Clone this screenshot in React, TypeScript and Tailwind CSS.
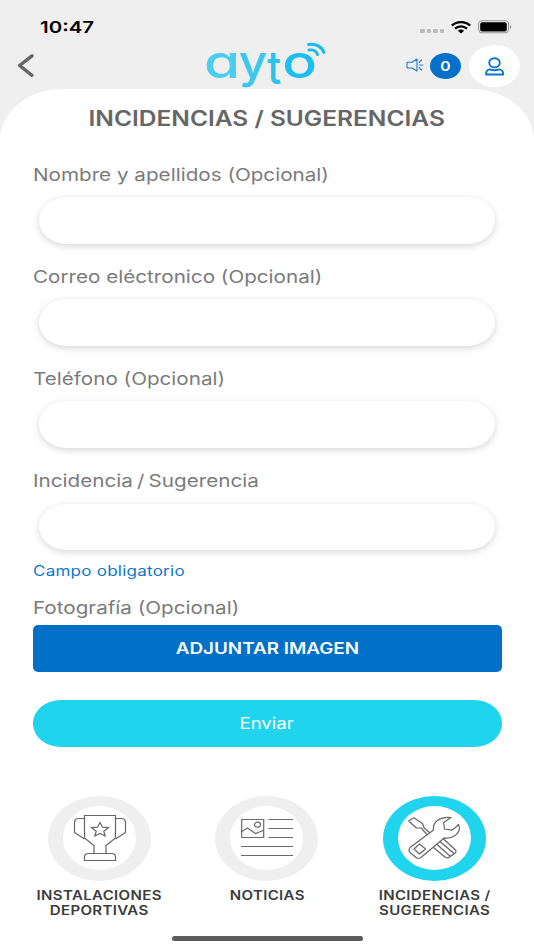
import type { ReactNode } from 'react'
import clsx from 'clsx'

interface TabProps {
  label: ReactNode
  active?: boolean
  children: ReactNode
}

const fields = [
  { label: 'Nombre y apellidos (Opcional)' },
  { label: 'Correo eléctronico (Opcional)' },
  { label: 'Teléfono (Opcional)' },
  { label: 'Incidencia / Sugerencia', tight: true },
]

function Label({ children, tight }: { children: ReactNode; tight?: boolean }) {
  return (
    <span
      className={clsx(
        'block w-fit origin-left scale-x-[1.18] whitespace-nowrap text-[17.5px] leading-6 text-[#7b7b7b]',
        tight && '[word-spacing:-1.4px]'
      )}
    >
      {children}
    </span>
  )
}

function StatusBar() {
  return (
    <div className="flex h-[42px] items-start justify-between pl-[40px] pr-[22px] pt-[15px]">
      <span className="origin-left scale-x-[1.24] text-[16.5px] font-semibold leading-6 text-black">10:47</span>
      <div className="flex items-center pt-[5px]">
        <div className="mr-[7px] mt-[8px] flex gap-[2px]">
          {[0, 1, 2, 3].map((dot) => (
            <span key={dot} className="h-[4px] w-[4.5px] rounded-[1px] bg-[#bdbdbd]" />
          ))}
        </div>
        <svg width="20" height="13" viewBox="0 0 20 13" className="mr-[7px]" fill="none" stroke="#000">
          <path d="M.8 4.6C6-.1 14-.1 19.2 4.6" strokeWidth="2.4" />
          <path d="M4 7.6c3.4-3 8.6-3 12 0" strokeWidth="2.2" />
          <path d="M6.9 9.7c1.8-1.5 4.4-1.5 6.2 0L10 12.6z" fill="#000" stroke="none" />
        </svg>
        <svg width="34" height="14" viewBox="0 0 34 14">
          <rect x=".6" y=".8" width="30" height="12" rx="3.6" fill="none" stroke="#999" strokeWidth="1.1" />
          <rect x="2.2" y="2.2" width="26.6" height="9.2" rx="2" fill="#000" />
          <path d="M32 4.9c1.6.6 1.6 3.5 0 4.1z" fill="#888" />
        </svg>
      </div>
    </div>
  )
}

function Logo() {
  return (
    <svg width="122" height="52" viewBox="205 40 122 52" className="overflow-visible" aria-label="ayto">
      <defs>
        <linearGradient id="ayto" x1="206" x2="325" y1="0" y2="0" gradientUnits="userSpaceOnUse">
          <stop offset="0" stopColor="#4fcdf0" />
          <stop offset="1" stopColor="#0cb9f0" />
        </linearGradient>
      </defs>
      <g className="font-[Inter] text-[45px] font-medium [font-feature-settings:'cv11']">
        <text transform="translate(204 77.7) scale(1.3 1.02)" fill="#4bcdf0">a</text>
        <text transform="translate(238.5 77.7) scale(1.11 1.02)" fill="#3bc8ef">y</text>
        <text transform="translate(267.200 84) scale(.9 1.02)" fill="#29c3f0">t</text>
        <text transform="translate(282.2 77.7) scale(1.28 1.02)" fill="#1bbff0">o</text>
      </g>
      <g fill="none" stroke="url(#ayto)" strokeWidth="3" strokeLinecap="round">
        <path d="M308.5 44.4c7-1 13.5 2.2 15.3 8" />
        <path d="M309 50c4-.6 7.7 1.2 8.5 4.500" />
      </g>
    </svg>
  )
}

function Header() {
  return (
    <header className="grid h-[47px] grid-cols-[205px_122px_1fr]">
      <div className="pl-[17px] pt-[11px]">
        <svg width="18" height="25" viewBox="0 0 18 25" fill="none" stroke="#666" strokeWidth="3.4" strokeLinecap="round" strokeLinejoin="round">
          <path d="M15 2.8L2.6 12.5L15 22.3" />
        </svg>
      </div>
      <div className="-mt-[2px]">
        <Logo />
      </div>
      <div className="flex items-start">
        <svg width="18" height="16" viewBox="0 0 18 16" className="ml-[78.5px] mt-[15px]" fill="none" stroke="#1a79cf" strokeWidth="1.1" strokeLinejoin="round" strokeLinecap="round">
          <path d="M1.5 5.2h4.5L11 2v12L6 11H1.500Q1 11 1 10.500V5.800Q1 5.200 1.500 5.200z" />
          <path d="M13.2 5.3L15.5 3.2M13.8 8h3M13.2 10.7l2.3 2.3" />
        </svg>
        <div className="ml-[6.5px] mt-[11px] flex h-[26px] w-[31px] items-center justify-center rounded-[50%] bg-[#0570c9]">
          <span className="scale-x-[1.2] text-[13px] font-semibold leading-none text-white">0</span>
        </div>
        <div className="ml-[8px] mt-[3px] flex h-[42px] w-[51px] items-center justify-center rounded-[50%] bg-white">
          <svg width="20" height="19" viewBox="0 0 20 19" fill="none" stroke="#0d74cb" strokeWidth="1.9">
            <ellipse cx="9.5" cy="5.8" rx="5.3" ry="4.6" />
            <path d="M5 12.4Q9.5 14 14 12.4Q18.2 12.6 18.2 17.5H1Q1 12.6 5 12.4z" strokeLinejoin="round" />
          </svg>
        </div>
      </div>
    </header>
  )
}

function Tab({ label, active, children }: TabProps) {
  return (
    <div className="flex w-[167.5px] flex-col items-center">
      <div
        className={clsx(
          'flex h-[85px] w-[103px] items-center justify-center rounded-[50%]',
          active ? 'bg-[#20d4ee]' : 'bg-[#efefef]'
        )}
      >
        <div className="flex h-[63.5px] w-[73px] items-center justify-center rounded-[50%] bg-white">{children}</div>
      </div>
      <span className="mt-[7px] scale-x-[1.2] whitespace-nowrap text-center text-[12.5px] font-semibold leading-[15px] tracking-[0.3px] text-[#3c3c3c]">
        {label}
      </span>
    </div>
  )
}

function TrophyIcon() {
  return (
    <svg width="54" height="48" viewBox="0 0 54 48" fill="none" stroke="#666" strokeWidth="1.2">
      <path d="M11.5 1.5h31v22.500L33 31.500v8H21v-8L11.500 24z" />
      <path d="M11.5 4.5H6Q1.5 4.5 1.5 8.5V18.5L11.5 25M42.5 4.5H48Q52.5 4.5 52.5 8.5V18.5L42.5 25" />
      <path d="M11.5 46.5v-3.5q0-3.5 4-3.5h23q4 0 4 3.500v3.500z" />
      <path d="M27 8.5l2.4 4.7 5.9.5-4.5 3.5 1.3 4.8-5.1-2.500-5.100 2.500 1.300-4.800-4.500-3.500 5.900-.5z" />
    </svg>
  )
}

function NewsIcon() {
  return (
    <svg width="52" height="40" viewBox="0 0 52 40" fill="none" stroke="#6b6b6b" strokeWidth="1.2">
      <path d="M.7 1.5h22v18H.7z" />
      <ellipse cx="16.5" cy="6.7" rx="3" ry="2.5" />
      <path d="M.7 13.5L6.5 10l8 5.5 8.200-3.200" />
      <path d="M27.5 1.5H52M27.5 10.5H52M27.5 19.5H52M0 28.5h52M0 37.5h52" />
    </svg>
  )
}

function ToolsIcon() {
  return (
    <svg width="54" height="44" viewBox="0 0 54 44" fill="none" stroke="#666" strokeWidth="1.2" strokeLinejoin="round">
      <path d="M3 31.5L26.5 14C25.5 6 33 .2 44 1.6L36.7 6.6L37.5 13L44.5 14.2L48.5 11.5L51.5 8.5C55 15.5 47 23.5 37.5 21.8L14 41.5Q11.5 43.5 9 41.5L3 36.5Q1 34 3 31.5z" />
      <path d="M12.5 28l6 5-6 5L7 33z" />
      <path d="M1.5 5L6.8 1.8L15.5 7.5L17 11.8L23 17M1.5 5L9.5 12H14.2L20 18.5" />
      <path d="M26.5 31.5L38.5 41.5Q40.5 42.5 42.5 41L48 37Q50 35 48 33.5L36 22.5M30 28.5l13.5 12M33 25.5l14 12" />
    </svg>
  )
}

export default function App() {
  return (
    <div className="flex h-[950px] w-[534px] flex-col overflow-hidden bg-[#efefef] font-[Inter,sans-serif]">
      <StatusBar />
      <Header />
      <main className="flex flex-1 flex-col rounded-t-[62px_52px] bg-white">
        <h1 className="mt-[15px] self-center scale-x-[1.167] whitespace-nowrap text-[21px] font-semibold leading-[30px] text-[#666]">
          INCIDENCIAS / SUGERENCIAS
        </h1>
        <form className="flex flex-col px-[32.5px] pt-[28.6px]">
          {fields.map(({ label, tight }) => (
            <label key={label} className="flex h-[102.2px] flex-col">
              <Label tight={tight}>{label}</Label>
              <input className="ml-[6px] mt-[10.5px] h-[46.5px] w-[456.5px] rounded-[28px/23px] bg-white px-5 shadow-[0_2px_7px_rgba(0,0,0,0.170)] outline-none" />
            </label>
          ))}
          <span className="-mt-[10.2px] w-fit origin-left scale-x-[1.215] text-[14px] leading-5 tracking-[0.2px] text-[#0d78d0]">
            Campo obligatorio
          </span>
          <div className="mt-[14.6px]">
            <Label>Fotografía (Opcional)</Label>
          </div>
          <button type="button" className="mt-[5.4px] h-[46.5px] rounded-[5px] bg-[#0070c9] text-white">
            <span className="inline-block scale-x-[1.215] text-[15.5px] font-semibold">ADJUNTAR IMAGEN</span>
          </button>
          <button type="button" className="mt-[28.5px] h-[46.5px] rounded-[28px/23px] bg-[#20d4ee] text-white">
            <span className="inline-block scale-x-[1.2] text-[15.5px]">Enviar</span>
          </button>
        </form>
        <nav className="mt-[49px] flex px-[16px]">
          <Tab label={<>INSTALACIONES<br />DEPORTIVAS</>}>
            <TrophyIcon />
          </Tab>
          <Tab label="NOTICIAS">
            <NewsIcon />
          </Tab>
          <Tab label={<>INCIDENCIAS /<br />SUGERENCIAS</>} active>
            <ToolsIcon />
          </Tab>
        </nav>
        <div className="mb-[9px] mt-auto h-[5.5px] w-[191px] shrink-0 self-center rounded-full bg-[#5c5c5c]" />
      </main>
    </div>
  )
}
